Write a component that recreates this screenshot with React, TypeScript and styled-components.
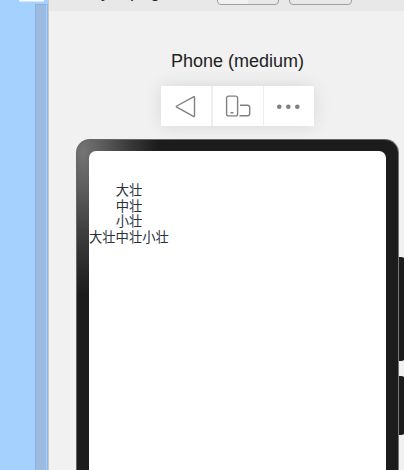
import React from 'react';
import styled, { createGlobalStyle } from 'styled-components';

const GlobalStyle = createGlobalStyle`
  * { box-sizing: border-box; }
  body { margin: 0; background: #f1f1f1; font-family: "Liberation Sans", Arial, sans-serif; overflow: hidden; }
`;

const Workspace = styled.div`
  display: flex;
  width: 404px;
  height: 470px;
  overflow: hidden;
`;

const EditorPane = styled.aside`
  display: flex;
  flex-direction: column;
  flex: 0 0 48px;
  background: #a4d1ff;
`;

const EditorTab = styled.div`
  flex: 0 0 4px;
  display: flex;
  justify-content: flex-end;
  padding-right: 4px;

  &::before {
    content: "";
    width: 25px;
    height: 1px;
    background: #fff;
    border-radius: 0 0 2px 2px;
    box-shadow: 0 1px 0 #d2e8ff;
  }
`;

const ScrollTrack = styled.div`
  flex: 1;
  width: 12px;
  margin-left: 35px;
  background: #9bbbe1;
  border: solid #8db0da;
  border-width: 1px 0 0 1px;
  box-shadow: 1px 0 0 #8fb8e8;
  border-right: 1px solid #a4d1ff;
`;

const Previewer = styled.main`
  flex: 1;
  min-width: 0;
  display: flex;
  flex-direction: column;
  border-left: 1px solid #c9c9c9;
  background: #f1f1f1;
`;

const TopBar = styled.header`
  flex: 0 0 11px;
  min-height: 0;
  height: 11px;
  display: flex;
  align-items: flex-end;
  padding: 0 0 6px 21px;
  background: #e8e8e8;
`;

const PagePath = styled.div`
  width: 147px;
  height: 24px;
  margin-bottom: 2px;
  line-height: 24px;
  font-size: 18px;
  white-space: pre;
  color: #222;
`;

const BarButton = styled.div<{ $split?: boolean; $width: number }>`
  flex: none;
  width: ${(p) => p.$width}px;
  height: 25px;
  margin-right: 10px;
  border: 1px solid #a0a0a0;
  border-radius: 4px;
  background: ${(p) => (p.$split ? 'linear-gradient(90deg, #f1f1f1 50%, #e8e8e8 50%)' : '#e8e8e8')};
`;

const DeviceName = styled.h1`
  margin: 38px 0 0 122px;
  height: 24px;
  line-height: 24px;
  font-size: 18px;
  font-weight: 400;
  white-space: nowrap;
  color: #222;
`;

const Toolbar = styled.div`
  display: grid;
  grid-template-columns: 50px 50px 50px;
  column-gap: 1.5px;
  width: 153px;
  height: 40px;
  margin: 13px 0 0 112px;
  background: #eee;
  box-shadow: 0 0 18px rgba(0, 0, 0, 0.11);
`;

const ToolButton = styled.button`
  display: grid;
  place-items: center;
  padding: 0;
  border: 0;
  background: #fff;

  svg { display: block; fill: none; stroke: #808080; stroke-width: 1.4; }
`;

const Phone = styled.section`
  position: relative;
  flex: none;
  width: 323px;
  height: 600px;
  margin: 13px 0 0 27px;
  padding: 11px 12px 0;
  border: 1px solid #666;
  border-right-color: #777;
  border-radius: 14px;
  background: radial-gradient(ellipse 75px 142px at 6px 12px, #747474 0%, #606060 22%, #3b3b3b 60%, #1c1c1c 100%);
`;

const Screen = styled.div`
  height: 100%;
  border-radius: 7px;
  background: #fff;
  padding-top: 32px;
  font-family: "Liberation Sans", "Noto Sans CJK SC", sans-serif;
  font-size: 13.3px;
  color: #28313c;
`;

const Line = styled.div<{ $indent?: boolean }>`
  height: 15.6px;
  line-height: 15.6px;
  padding-left: ${(p) => (p.$indent ? 26.7 : 0)}px;
  white-space: nowrap;
`;

const SideKey = styled.div<{ $top: number; $height: number }>`
  position: absolute;
  left: 322px;
  top: ${(p) => p.$top}px;
  width: 7px;
  height: ${(p) => p.$height}px;
  border-radius: 0 5px 5px 0;
  background: #1c1c1c;
`;

export default function App() {
  return (
    <>
      <GlobalStyle />
      <Workspace>
        <EditorPane>
          <EditorTab />
          <ScrollTrack />
        </EditorPane>
        <Previewer>
          <TopBar>
            <PagePath>entry : /page</PagePath>
            <BarButton $split $width={62} />
            <BarButton $width={63} />
          </TopBar>
          <DeviceName>Phone (medium)</DeviceName>
          <Toolbar>
            <ToolButton aria-label="Back">
              <svg width="50" height="40">
                <path d="M32.5 10.8Q33.5 10.3 33.5 11.4V29.7Q33.5 31 32.4 30.4L15.8 21.2Q14.8 20.6 15.8 20Z" />
              </svg>
            </ToolButton>
            <ToolButton aria-label="Rotate">
              <svg width="50" height="40">
                <rect x="13.6" y="10.1" width="11" height="19.8" rx="2" />
                <path d="M17.5 26.8H20.5M27 19.2H34.4Q36.7 19.2 36.7 21.4V27.5Q36.7 29.8 34.4 29.8H26.5" />
              </svg>
            </ToolButton>
            <ToolButton aria-label="More">
              <svg width="50" height="40">
                <g fill="#808080" stroke="none">
                  <circle cx="15.3" cy="20.7" r="2.3" />
                  <circle cx="24.3" cy="20.7" r="2.3" />
                  <circle cx="33.3" cy="20.7" r="2.3" />
                </g>
              </svg>
            </ToolButton>
          </Toolbar>
          <Phone>
            <Screen>
              <Line $indent>大壮</Line>
              <Line $indent>中壮</Line>
              <Line $indent>小壮</Line>
              <Line>大壮中壮小壮</Line>
            </Screen>
            <SideKey $top={117} $height={104} />
            <SideKey $top={236} $height={59} />
          </Phone>
        </Previewer>
      </Workspace>
    </>
  );
}
